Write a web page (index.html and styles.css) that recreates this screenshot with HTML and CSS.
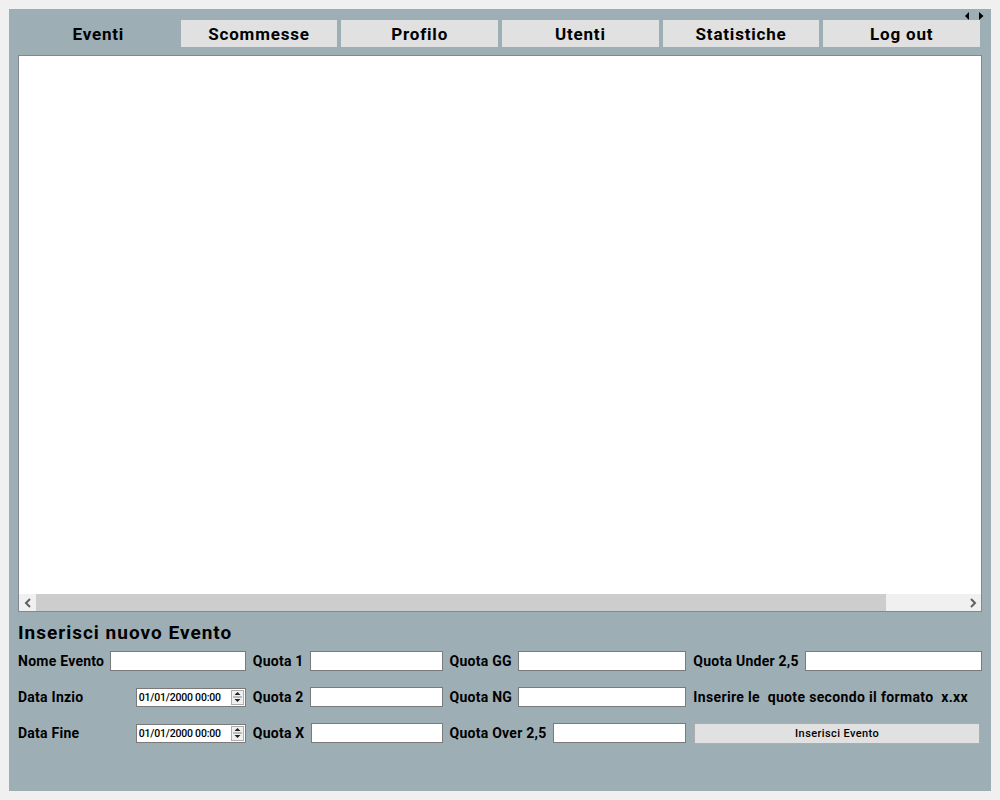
FILE: index.html
```html
<!DOCTYPE html>
<html lang="it">
<head>
<meta charset="utf-8">
<title>Eventi</title>
<link rel="stylesheet" href="styles.css">
</head>
<body>
<div class="panel">
  <div class="tab-scroll">
    <svg width="21" height="10" viewBox="0 0 21 10"><path d="M5 1 L1 5 L5 9 Z" fill="#000"/><path d="M15 1 L19.5 5 L15 9 Z" fill="#000"/></svg>
  </div>
  <div class="tabs">
    <div class="tab active">Eventi</div>
    <div class="tab">Scommesse</div>
    <div class="tab">Profilo</div>
    <div class="tab">Utenti</div>
    <div class="tab">Statistiche</div>
    <div class="tab">Log out</div>
  </div>
  <div class="content">
    <div class="content-body"></div>
    <div class="hscroll">
      <div class="sb-btn"><svg width="8" height="10" viewBox="0 0 8 10"><path d="M6 1 L2 5 L6 9" fill="none" stroke="#606060" stroke-width="2"/></svg></div>
      <div class="sb-track"><div class="sb-thumb"></div></div>
      <div class="sb-btn"><svg width="8" height="10" viewBox="0 0 8 10"><path d="M2 1 L6 5 L2 9" fill="none" stroke="#606060" stroke-width="2"/></svg></div>
    </div>
  </div>
  <div class="form">
    <div class="form-title">Inserisci nuovo Evento</div>
    <div class="row">
      <div class="cell c1"><span class="lbl">Nome Evento</span><span class="field"></span></div>
      <div class="cell c2"><span class="lbl">Quota 1</span><span class="field"></span></div>
      <div class="cell c3"><span class="lbl">Quota GG</span><span class="field"></span></div>
      <div class="cell c4"><span class="lbl">Quota Under 2,5</span><span class="field"></span></div>
    </div>
    <div class="row">
      <div class="cell c1 spread"><span class="lbl">Data Inzio</span><span class="date"><span class="date-text">01/01/2000 00:00</span><span class="spin"><svg width="11" height="14" viewBox="0 0 11 14"><path d="M2.5 5 L5.5 2 L8.5 5 Z" fill="#222"/><path d="M1 7 H10" stroke="#888" stroke-width="1"/><path d="M2.5 9 L5.5 12 L8.5 9 Z" fill="#222"/></svg></span></span></div>
      <div class="cell c2"><span class="lbl">Quota 2</span><span class="field"></span></div>
      <div class="cell c3"><span class="lbl">Quota NG</span><span class="field"></span></div>
      <div class="cell c4"><span class="lbl note">Inserire le&nbsp; quote secondo il formato&nbsp; x.xx</span></div>
    </div>
    <div class="row">
      <div class="cell c1 spread"><span class="lbl">Data Fine</span><span class="date"><span class="date-text">01/01/2000 00:00</span><span class="spin"><svg width="11" height="14" viewBox="0 0 11 14"><path d="M2.5 5 L5.5 2 L8.5 5 Z" fill="#222"/><path d="M1 7 H10" stroke="#888" stroke-width="1"/><path d="M2.5 9 L5.5 12 L8.5 9 Z" fill="#222"/></svg></span></span></div>
      <div class="cell c2"><span class="lbl">Quota X</span><span class="field"></span></div>
      <div class="cell c3"><span class="lbl">Quota Over 2,5</span><span class="field"></span></div>
      <div class="cell c4"><button class="btn">Inserisci Evento</button></div>
    </div>
  </div>
</div>
</body>
</html>
```

FILE: styles.css
```css
html, body {
  margin: 0;
  padding: 0;
  background: #f0f0f0;
}
body {
  padding: 9px;
  font-family: Roboto, "Liberation Sans", sans-serif;
  color: #000;
}
.panel {
  position: relative;
  width: 982px;
  height: 782px;
  box-sizing: border-box;
  background: #9eaeb5;
  padding: 11px 9px 0 9px;
}
.tab-scroll {
  position: absolute;
  top: 2px;
  left: 955px;
  line-height: 0;
}
.tabs {
  display: flex;
  gap: 4px;
  margin: 0 2px 0 2px;
  height: 27px;
}
.tab {
  flex: 1;
  background: #e1e1e1;
  font-weight: 700;
  font-size: 17px;
  letter-spacing: 0.8px;
  display: flex;
  align-items: center;
  justify-content: center;
  padding-top: 1px;
}
.tab.active {
  background: transparent;
}
.content {
  margin-top: 8px;
  height: 557px;
  box-sizing: border-box;
  border: 1px solid #828790;
  background: #fff;
  display: flex;
  flex-direction: column;
}
.content-body {
  flex: 1;
}
.hscroll {
  height: 17px;
  display: flex;
  background: #f0f0f0;
}
.sb-btn {
  width: 17px;
  display: flex;
  align-items: center;
  justify-content: center;
}
.sb-track {
  flex: 1;
  display: flex;
}
.sb-thumb {
  width: 850px;
  background: #cdcdcd;
}
.form {
  padding-top: 8px;
}
.form-title {
  font-size: 19px;
  font-weight: 700;
  letter-spacing: 1px;
  line-height: 26px;
}
.row {
  display: flex;
  height: 30px;
  align-items: center;
  gap: 7px;
  margin-bottom: 6px;
}
.cell {
  display: flex;
  align-items: center;
  gap: 6px;
}
.c1 { width: 228px; }
.c2 { width: 190px; }
.c3 { width: 237px; }
.c4 { width: 289px; }
.spread { justify-content: space-between; }
.lbl {
  font-size: 14px;
  font-weight: 700;
  letter-spacing: 0.25px;
  white-space: nowrap;
}
.lbl.note {
  letter-spacing: 0.35px;
}
.field {
  flex: 1;
  height: 20px;
  box-sizing: border-box;
  background: #fff;
  border: 1px solid #7a7a7a;
}
.date {
  width: 110px;
  height: 19px;
  box-sizing: border-box;
  background: #fff;
  border: 1px solid #7a7a7a;
  display: flex;
  align-items: center;
  justify-content: space-between;
  padding-left: 2px;
}
.date-text {
  font-size: 10.5px;
  font-weight: 500;
  letter-spacing: -0.2px;
}
.spin {
  width: 13px;
  height: 15px;
  margin-right: 1px;
  box-sizing: border-box;
  border: 1px solid #adadad;
  background: #f0f0f0;
  display: flex;
  align-items: center;
  justify-content: center;
}
.btn {
  width: 100%;
  margin: 0 2px 0 1px;
  height: 21px;
  background: #e1e1e1;
  border: 1px solid #adadad;
  font-family: Roboto, "Liberation Sans", sans-serif;
  font-size: 11px;
  font-weight: 500;
  letter-spacing: 0.4px;
  color: #000;
  padding: 0;
}
```
